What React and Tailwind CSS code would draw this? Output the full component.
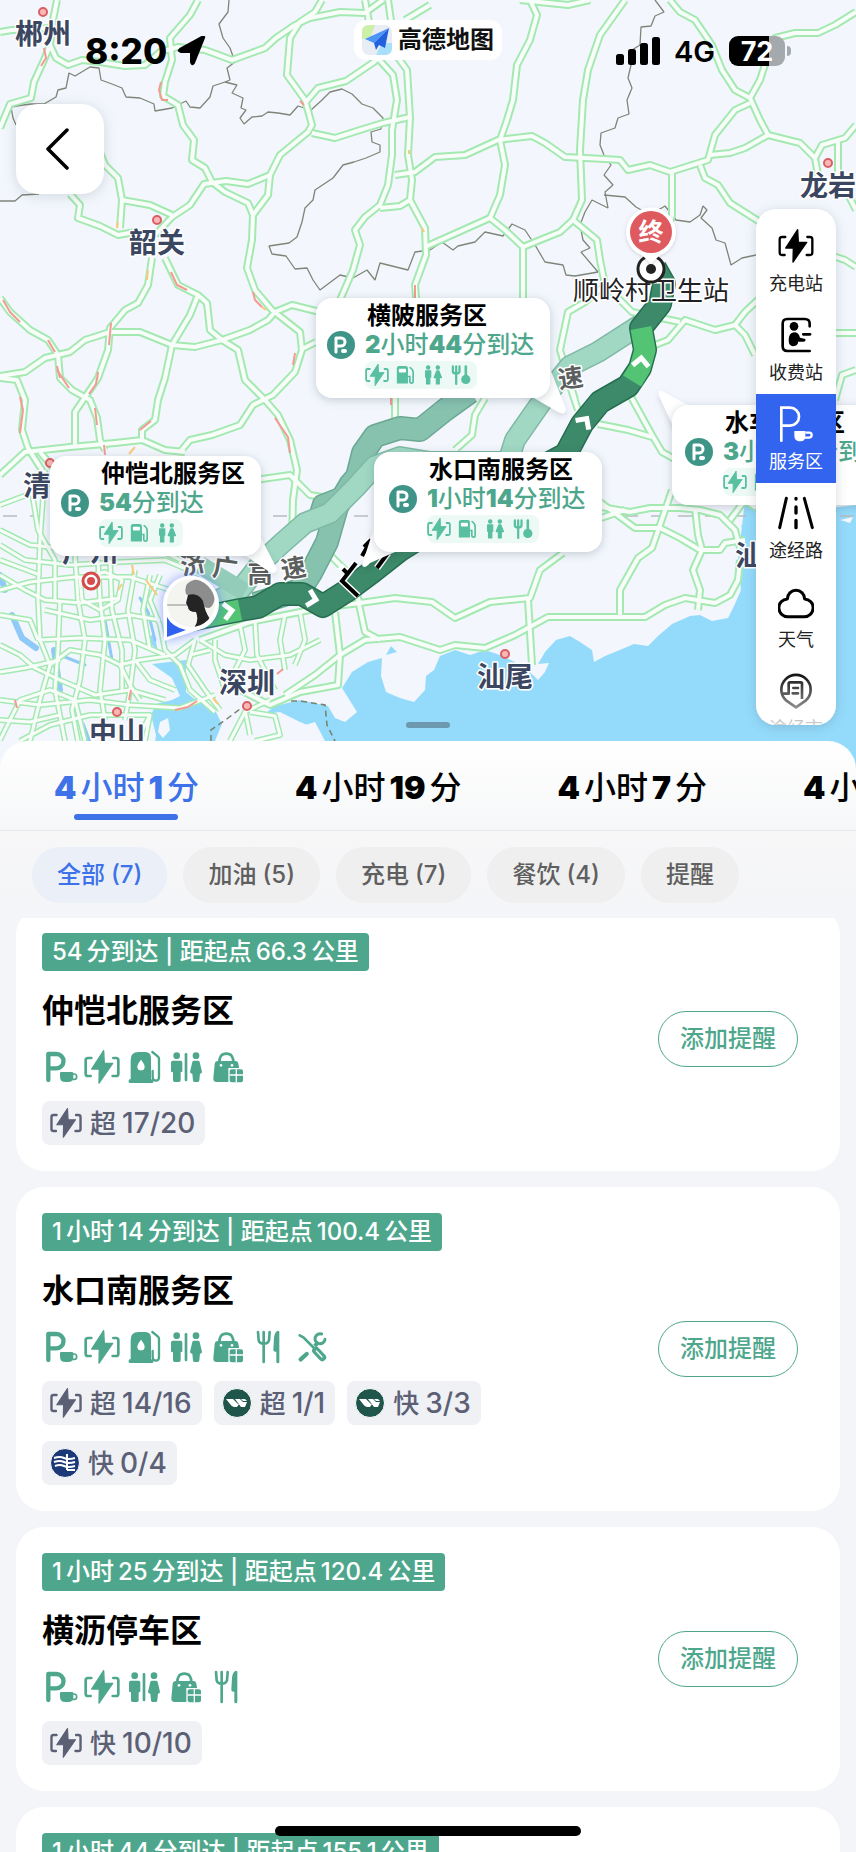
import React, { useState } from 'react';
import clsx from 'clsx';

/* ---------- map data ---------- */

const roads = [
  'M57 0 L53 20 L50 45 L44 60 L34 82 L31 98 L10 104 L0 128',
  'M0 32 L12 30 L50 28',
  'M50 45 L56 58 L68 65 L82 60 L100 62 L125 66 L145 65 L160 52 L178 47 L205 50 L232 60 L265 48 L276 38 L295 25 L310 18 L340 12 L365 13 L383 0',
  'M198 0 L190 15 L170 38 L172 60 L165 82 L163 96 L178 105 L183 125 L194 140 L192 160 L205 168 L212 182',
  'M322 0 L315 12 L300 22 L290 38 L288 62 L287 75 L305 100 L312 125 L308 132 L280 155 L270 175 L248 184 L226 181 L204 184 L190 205 L172 217 L155 235',
  'M95 140 L105 165 L118 178 L122 200 L150 205 L172 215',
  'M122 200 L120 228',
  'M70 194 L80 205 L78 218 L100 226 L118 235 L135 232',
  'M212 182 L225 192 L248 203 L253 215 L252 240 L247 268 L255 290 L272 310 L300 332 L302 350 L295 372 L273 395 L253 405 L240 425 L212 435 L190 440 L180 452',
  'M270 175 L268 195 L253 215',
  'M306 102 L318 88 L346 81 L374 62 L392 45',
  'M312 133 L335 138 L360 130 L383 123 L410 117',
  'M365 0 L375 55 L393 75 L397 100 L392 130 L392 155 L388 185 L380 205 L365 217 L355 230 L360 245 L353 270 L340 300',
  'M388 0 L396 55 L407 70 L410 118 L408 155 L412 180 L410 200 L425 228 L426 255 L415 285 L417 310',
  'M380 208 L400 206 L410 200',
  'M405 20 L430 5',
  'M395 175 L415 172 L435 157 L465 155 L498 140 L532 136 L545 143 L565 157 L605 159 L620 160 L628 170 L650 165 L670 172 L708 160 L715 135 L735 110 L750 103',
  'M530 0 L537 15 L530 40 L517 65 L513 100 L507 120 L500 140 L505 165 L500 195 L490 218 L505 230 L523 247 L523 320',
  'M490 218 L425 247',
  'M625 0 L600 35 L588 70 L583 100 L580 150 L582 200 L573 220 L597 240 L600 260 L605 285 L632 312 L680 322',
  'M573 220 L560 232 L545 238 L523 247',
  'M672 172 L672 215 L665 240',
  'M670 0 L680 12 L695 20 L712 45 L722 70 L735 90 L750 98 L760 120 L768 135 L800 143 L815 158 L818 175',
  'M815 158 L822 145 L845 138 L856 125',
  'M838 142 L838 175 L856 210',
  'M750 98 L760 80 L768 55 L775 38 L795 33 L818 33 L835 25 L856 12',
  'M768 135 L745 148 L730 153 L710 155',
  'M700 165 L705 178 L718 185 L730 203 L760 222',
  'M520 0 L568 5 L590 0',
  'M760 298 L745 312 L735 325 L715 330 L685 320 L668 340 L650 347',
  'M605 285 L585 302 L568 312 L560 350 L575 400',
  'M735 325 L745 335 L755 355',
  'M830 255 L845 260 L856 267',
  'M830 333 L856 333',
  'M856 370 L842 375 L835 400',
  'M630 395 L652 435 L662 452 L680 462',
  'M598 424 L628 430 L652 437',
  'M152 258 L148 285 L138 303 L125 310 L110 328 L108 350 L98 378 L75 412 L75 445',
  'M165 258 L178 285 L198 295 L190 315 L172 345 L165 378 L158 400 L155 420 L142 430 L142 442',
  'M198 295 L207 303 L210 330 L222 340 L238 350 L245 380 L265 400 L278 415 L290 440 L297 470 L293 500 L292 540',
  'M222 340 L250 330 L268 320 L275 312 L292 305 L320 312',
  'M0 376 L25 372 L45 358 L70 352 L85 340 L110 332 L140 332 L172 345 L195 347 L222 340',
  'M0 298 L10 312 L30 330 L48 340 L58 355 L60 378 L72 390 L90 400 L97 418 L100 440 L105 450',
  'M316 342 L300 350',
  'M0 378 L17 380 L25 400 L22 430 L28 448 L45 475',
  'M0 475 L25 452 L70 447 L115 443 L142 440 L165 450 L185 452',
  'M255 480 L290 475 L310 495 L340 500',
  'M395 380 L395 418',
  'M485 398 L475 415 L472 435 L455 450',
  'M568 380 L578 410',
  'M590 505 L630 512 L650 508 L680 508 L700 510 L720 515 L735 530 L740 548',
  'M595 520 L625 510',
  'M600 502 L635 528 L660 528 L680 538 L700 550 L720 550 L725 543 L745 540',
  'M672 490 L660 525 L652 548 L638 558 L620 590 L620 615',
  'M695 508 L698 535 L702 550 L693 570 L700 590 L698 610',
  'M740 560 L738 580 L730 595 L715 603 L685 598 L665 605 L645 617 L548 617 L515 635 L485 648 L455 645 L440 650 L400 637 L365 640 L340 655 L315 675 L285 695',
  'M563 553 L540 570 L530 598 L490 602 L455 618 L432 602 L395 598 L360 603 L320 608 L250 622 L200 640',
  'M528 600 L532 665',
  'M357 595 L365 632 L380 640',
  'M335 612 L340 655 L338 685 L300 692 L270 705 L240 690',
  'M730 520 L745 500 L756 508',
  'M40 452 L80 500 L130 520 L200 515',
  'M320 545 L345 570 L360 603',
];

// city grid around the delta, drawn thinner than the trunk roads
const streets = [
  'M0 505 L40 490 L70 470', 'M0 545 L25 560 L70 565 L120 562 L165 560 L200 575',
  'M0 530 L30 545 L60 548 L110 545 L160 552', 'M0 590 L30 582 L75 577 L130 577 L170 590',
  'M0 575 L25 590 L45 600 L80 603 L120 598', 'M45 470 L40 540 L38 600 L40 640 L50 665 L40 700 L30 741',
  'M30 480 L38 530 L55 560 L55 600', 'M75 555 L78 600 L85 640 L80 680 L72 710 L78 741',
  'M98 560 L100 600 L105 640 L100 690 L105 720', 'M110 560 L112 610 L122 650 L122 690',
  'M135 570 L128 610 L135 650 L130 690 L125 720', 'M150 575 L143 610 L150 650',
  'M80 578 L82 600 L100 610 L118 600 L122 580 L105 572 Z', 'M0 645 L20 655 L35 668 L60 680 L95 695 L130 690 L165 700',
  'M38 640 L80 638 L130 640 L165 655', 'M0 700 L40 705 L90 700 L130 705 L180 708 L215 695',
  'M0 740 L20 700 L50 690 L75 700 L85 741', 'M20 741 L50 725 L90 715 L150 715',
  'M50 665 L70 650 L100 655 L120 665 L140 660 L175 655 L195 640', 'M0 615 L30 620 L38 640',
  'M45 610 L90 620 L130 615 L160 620', 'M160 575 L150 600 L160 625 L165 650 L180 665 L190 690 L215 712',
  'M195 640 L188 665 L205 690 L220 710', 'M200 640 L225 655 L250 660 L290 655 L320 640',
  'M215 640 L215 660 L225 690', 'M210 650 L190 655', 'M240 625 L245 650 L230 680', 'M255 620 L257 655 L275 690',
  'M285 615 L280 640 L285 670', 'M300 612 L305 640 L295 665', 'M135 660 L150 680 L175 690', 'M120 665 L130 685 L140 700',
  'M60 600 L58 650 L55 690 L65 741', 'M0 672 L25 668 L60 660', 'M245 710 L250 735', 'M250 712 L275 716 L280 735 L255 741',
  'M0 560 L40 575', 'M0 720 L30 722 L60 715', 'M140 735 L150 715 L145 741', 'M270 700 L245 712 L230 741', 'M180 560 L150 545 L110 530',
];

const jams = [
  'M44 48 L46 58 L41 66', 'M161 82 L159 90 L162 100 L168 100', 'M171 272 L177 285 L187 290', 'M253 292 L255 300 L262 307',
  'M3 300 L10 312 L20 322', 'M48 340 L55 352', 'M57 366 L60 378', 'M111 323 L109 345', 'M98 372 L97 380', 'M20 397 L23 410 L20 433',
  'M97 378 L96 384 L89 394', 'M57 370 L69 388', 'M95 408 L97 425', 'M151 421 L140 430', 'M275 418 L288 437 L290 453',
  'M295 353 L293 365', 'M175 710 L188 707 L197 701', 'M131 690 L129 700', 'M15 700 L17 708', 'M300 101 L304 105', 'M391 398 L391 405',
  'M104 445 L105 455', 'M415 285 L415 298', 'M277 674 L283 669',
];

const slow = ['M148 270 L147 280', 'M118 222 L117 228', 'M262 307 L266 310', 'M146 580 L157 595', 'M213 698 L218 704', 'M118 590 L122 584', 'M409 150 L409 154', 'M129 454 L135 447', 'M132 565 L134 575', 'M422 228 L424 232'];

const borders = [
  'M229 0 L228 12 L219 24 L223 38 L230 48 L235 62 L227 68 L230 80 L225 82 L237 85 L232 93 L243 98 L241 108 L246 110 L240 118 L244 124 L252 117 L262 116 L268 112 L278 113 L290 115 L298 106 L311 110 L322 100 L330 92 L342 89 L352 94 L362 104 L373 108 L383 118 L381 129 L371 132 L372 142 L380 145 L380 152 L366 158 L354 162 L343 165 L333 178 L315 190 L313 200 L305 208 L302 222 L297 237 L289 243 L269 246 L272 254 L286 256 L295 269 L307 268 L313 280 L320 290 L340 275 L353 278 L367 270 L375 280 L380 263 L400 268 L408 270 L415 252 L430 250',
  'M225 82 L213 86 L210 97 L200 108 L190 107 L186 101 L172 108 L155 111 L154 104 L140 98 L126 97 L122 88 L112 84 L101 80 L99 68 L90 67 L75 76 L69 73 L66 88 L58 90 L56 97 L44 104 L31 104 L23 105 L11 107 L13 118 L16 125',
  'M0 201 L15 201 L22 195 L39 194',
  'M655 0 L664 12 L655 16 L651 26 L641 27 L640 45 L632 50 L631 65 L628 78 L632 88 L627 100 L629 114 L618 118 L615 128 L601 133 L600 145 L604 155 L611 165 L604 175 L613 185 L605 192 L608 208 L592 200 L585 212 L580 225 L583 240 L590 248 L581 252 L598 272 L575 276 L566 275 L563 265 L545 262 L535 245 L525 230 L512 224 L503 236 L485 232 L475 242 L458 246 L453 250 L442 242 L430 250',
  'M604 195 L625 197 L636 207 L650 215 L665 206 L676 220 L690 222 L700 215 L703 206 L707 210 L701 218 L712 228 L716 240 L725 243 L731 265 L742 258 L756 255',
];

const cities = [
  { name: '郴州', x: 43, y: 44, dot: [43, 12] },
  { name: '韶关', x: 157, y: 253, dot: [157, 220] },
  { name: '龙岩', x: 828, y: 196, dot: [828, 163] },
  { name: '清远', x: 51, y: 496, dot: [50, 463] },
  { name: '广州', x: 90, y: 562 },
  { name: '深圳', x: 247, y: 693, dot: [247, 706] },
  { name: '中山', x: 117, y: 743, dot: [117, 712] },
  { name: '汕尾', x: 505, y: 687, dot: [505, 654] },
  { name: '汕头', x: 763, y: 566 },
];

/* ---------- icons ---------- */

const Svg = ({ className = 'h-9 w-9', children, ...rest }) => (
  <svg viewBox="0 0 108 108" className={className} fill="currentColor" aria-hidden="true" {...rest}>
    {children}
  </svg>
);

const ParkingCup = ({ className }) => (
  <Svg className={className}>
    <path d="M19 93 V15 H43 A21 21 0 0 1 43 58 H28" fill="none" stroke="currentColor" strokeWidth="13" strokeLinecap="round" strokeLinejoin="round" />
    <path d="M57 69 H90 Q94 69 94 73 V83 Q94 99 79 99 H70 Q54 99 54 83 V73 Q54 69 57 69 Z" />
    <path d="M92 75 H96 A8 8 0 0 1 96 91 H90" fill="none" stroke="currentColor" strokeWidth="5" />
  </Svg>
);

const Charge = ({ className, thin }) => (
  <Svg className={className}>
    <path d="M59 5 L23 60 H46 L45 102 L86 43 H61 Z" stroke="currentColor" strokeWidth="4" strokeLinejoin="round" />
    <path
      d="M22 27 H12 Q5 27 5 34 V74 Q5 81 12 81 H20 M88 27 H96 Q103 27 103 34 V74 Q103 81 96 81 H86"
      fill="none"
      stroke="currentColor"
      strokeWidth={thin ? 7 : 8}
      strokeLinecap="round"
    />
  </Svg>
);

const Pump = ({ className }) => (
  <Svg className={className}>
    <path d="M14 96 V32 Q14 9 37 9 H58 Q75 9 75 28 V96 Z" />
    <rect x="8" y="91" width="74" height="11" rx="4" />
    <path d="M45 32 Q56 46 56 53 A11 11 0 0 1 34 53 Q34 46 45 32 Z" fill="white" />
    <path d="M79 9 L96 23 Q99 26 99 31 V84 Q99 95 90 95 Q80 95 80 84 V66" fill="none" stroke="currentColor" strokeWidth="7" strokeLinecap="round" />
  </Svg>
);

const Restroom = ({ className }) => (
  <Svg className={className}>
    <circle cx="26" cy="20" r="10" />
    <path d="M14 35 H38 Q43 35 43 41 V66 Q43 70 38 70 V94 Q38 99 33 99 H20 Q15 99 15 94 V70 Q9 70 9 66 V41 Q9 35 14 35 Z" />
    <rect x="50" y="12" width="8" height="85" rx="4" />
    <circle cx="84" cy="20" r="10" />
    <path d="M78 35 H90 Q94 35 95 39 L102 68 Q102 74 96 74 L94 94 Q94 99 90 99 H79 Q75 99 75 94 L73 74 Q66 74 66 68 L73 39 Q74 35 78 35 Z" />
  </Svg>
);

const ShopBag = ({ className }) => (
  <Svg className={className}>
    <path d="M28 42 Q27 14 49 14 Q71 14 70 42" fill="none" stroke="currentColor" strokeWidth="8" />
    <path d="M24 36 H76 Q84 36 85 44 L88 60 V99 H20 Q9 99 10 88 L14 45 Q15 36 24 36 Z" />
    <circle cx="33" cy="49" r="4" fill="white" />
    <circle cx="66" cy="49" r="4" fill="white" />
    <rect x="55" y="57" width="46" height="44" fill="white" />
    <rect x="59" y="61" width="40" height="39" rx="6" />
    <path d="M79 61 V100 M59 78 H99" stroke="white" strokeWidth="4" />
  </Svg>
);

const Dining = ({ className }) => (
  <Svg className={className}>
    <path d="M18 9 L20 34 Q22 44 35 44 Q48 44 51 34 L53 9 M35 9 V99" fill="none" stroke="currentColor" strokeWidth="8" strokeLinecap="round" />
    <path d="M82 9 V98 Q82 103 78 103 Q73 103 73 98 V68 Q64 68 64 62 L66 26 Q68 8 78 5 Q82 5 82 9 Z" />
  </Svg>
);

const Tools = ({ className }) => (
  <Svg className={className}>
    <path d="M17 19 L28 25 L60 57" fill="none" stroke="currentColor" strokeWidth="8" strokeLinecap="round" />
    <path d="M66 65 L85 85" stroke="currentColor" strokeWidth="23" strokeLinecap="round" />
    <path d="M67 66 L84 84" stroke="white" strokeWidth="4" strokeLinecap="round" />
    <path d="M20 91 L38 75" stroke="currentColor" strokeWidth="13" strokeLinecap="round" />
    <path d="M62 51 L70 43" stroke="currentColor" strokeWidth="12" />
    <path d="M83 15 A15 15 0 1 0 93 31" fill="none" stroke="currentColor" strokeWidth="9" strokeLinecap="round" />
  </Svg>
);

const MiniPump = ({ className }) => (
  <Svg className={className}>
    <path d="M10 100 V18 Q10 6 22 6 H58 Q70 6 70 18 V100 Z" />
    <rect x="21" y="20" width="38" height="20" rx="4" fill="white" />
    <path d="M82 14 Q98 24 98 40 V88 Q98 98 90 98 Q80 98 80 88 V62 H70" fill="none" stroke="currentColor" strokeWidth="9" strokeLinecap="round" />
  </Svg>
);

const MiniPeople = ({ className }) => (
  <Svg className={className}>
    <circle cx="28" cy="14" r="12" />
    <path d="M14 32 H42 V66 H37 V102 H19 V66 H14 Z" strokeLinejoin="round" stroke="currentColor" strokeWidth="6" />
    <circle cx="80" cy="14" r="12" />
    <path d="M74 32 H86 L100 68 H88 V102 H72 V68 H60 Z" strokeLinejoin="round" stroke="currentColor" strokeWidth="6" />
  </Svg>
);

const MiniDining = ({ className }) => (
  <Svg className={className}>
    <path d="M10 8 V34 Q10 46 28 46 Q46 46 46 34 V8 M28 8 V102" fill="none" stroke="currentColor" strokeWidth="12" strokeLinecap="round" />
    <path d="M80 8 V60" stroke="currentColor" strokeWidth="14" strokeLinecap="round" />
    <circle cx="80" cy="78" r="25" />
  </Svg>
);

const Toll = ({ className }) => (
  <Svg className={className}>
    <path d="M95 28 V20 Q95 6 80 6 H28 Q14 6 14 20 V88 Q14 102 28 102 H95" fill="none" stroke="currentColor" strokeWidth="8" strokeLinecap="round" />
    <circle cx="48" cy="28" r="13" />
    <path d="M48 46 Q62 46 66 62 L82 66 Q84 74 76 74 L60 74 V78 Q56 88 44 88 Q32 86 32 70 Q32 48 48 46 Z" />
    <path d="M76 52 H96" stroke="currentColor" strokeWidth="8" strokeLinecap="round" />
  </Svg>
);

const ServiceArea = ({ className }) => (
  <Svg className={className}>
    <path d="M10 104 V5 H36 A27 27 0 0 1 36 59 H12" fill="none" stroke="currentColor" strokeWidth="8" strokeLinecap="round" />
    <path d="M49 75 H82 V90 Q82 106 68 106 H62 Q49 104 49 88 Z" />
    <path d="M82 80 H94 Q101 80 101 87 Q101 95 92 95 H78" fill="none" stroke="currentColor" strokeWidth="7" />
  </Svg>
);

const RoadIcon = ({ className }) => (
  <Svg className={className} fill="none" stroke="currentColor" strokeLinecap="round">
    <path d="M25 10 L5 98 M79 10 L103 98" strokeWidth="9" />
    <path d="M54 10 V12 M54 36 V54 M54 76 V98" strokeWidth="10" />
  </Svg>
);

const Cloud = ({ className }) => (
  <Svg className={className} fill="none" stroke="currentColor" strokeWidth="9">
    <path d="M28 45 A26 26 0 1 1 80 45 A26 26 0 0 1 78 98 H30 A26 26 0 0 1 28 45 Z" strokeLinejoin="round" />
  </Svg>
);

const CityPin = ({ className }) => (
  <Svg className={className} fill="none" stroke="currentColor" strokeWidth="8" strokeLinejoin="round">
    <path d="M54 103 L24 82 A44 44 0 1 1 84 82 Z" />
    <path d="M14 62 H32 V32 Q32 28 36 28 H68 Q72 28 72 32 V78" />
    <path d="M46 45 H60 M44 61 H60" strokeLinecap="round" />
  </Svg>
);

const GreenBrand = () => (
  <svg viewBox="0 0 30 30" className="h-[30px] w-[30px]" aria-hidden="true">
    <circle cx="15" cy="15" r="14.5" fill="#20554b" stroke="white" />
    <path d="M4 11 H11 L16 16 H17 L15 19 H12 Q10 19 8 16 Z" fill="white" />
    <path d="M13 11 H18 L21 14 H25 L23 19 H19 Z M19 11 H23 L25 13 H21 Z" fill="white" />
  </svg>
);

const NavyBrand = () => (
  <svg viewBox="0 0 30 30" className="h-[30px] w-[30px]" aria-hidden="true">
    <circle cx="15" cy="15" r="14.5" fill="#1d3a78" stroke="white" />
    <path d="M4 10 Q10 8 14 10 T25 10 M4 14 Q10 12 14 14 T25 14 M5 18 Q10 16 14 18 T25 18" fill="none" stroke="white" strokeWidth="2" />
    <path d="M17 6 V22 M17 22 H25" fill="none" stroke="white" strokeWidth="2" />
  </svg>
);

const facilityIcons = { parking: ParkingCup, charge: Charge, pump: Pump, restroom: Restroom, shop: ShopBag, dining: Dining, repair: Tools };
const miniIcons = { charge: Charge, pump: MiniPump, restroom: MiniPeople, dining: MiniDining };

/* ---------- content ---------- */

const routes = ['4小时1分', '4小时19分', '4小时7分', '4小时26分'];

const filters = [
  { label: '全部', count: 7 },
  { label: '加油', count: 5 },
  { label: '充电', count: 7 },
  { label: '餐饮', count: 4 },
  { label: '提醒' },
];

const layers = [
  { label: '充电站', icon: Charge },
  { label: '收费站', icon: Toll },
  { label: '服务区', icon: ServiceArea },
  { label: '途经路', icon: RoadIcon },
  { label: '天气', icon: Cloud },
  { label: '途经市', icon: CityPin },
];

const callouts = [
  { name: '水车服务区', eta: '3小时19分到达', place: 'left-[672px] top-[405px] pl-[13px]', icons: ['charge', 'pump', 'restroom'] },
  { name: '横陂服务区', eta: '2小时44分到达', place: 'left-[316px] top-[298px] pl-[11px]', icons: ['charge', 'pump', 'restroom', 'dining'] },
  { name: '仲恺北服务区', eta: '54分到达', place: 'left-[50px] top-[456px] pl-[11px]', icons: ['charge', 'pump', 'restroom'] },
  { name: '水口南服务区', eta: '1小时14分到达', place: 'left-[374px] top-[452px] pl-[15px]', icons: ['charge', 'pump', 'restroom', 'dining'] },
];

const areas = [
  {
    name: '仲恺北服务区',
    info: '54分到达 | 距起点66.3公里',
    facilities: ['parking', 'charge', 'pump', 'restroom', 'shop'],
    chargers: [{ text: '超17/20' }],
  },
  {
    name: '水口南服务区',
    info: '1小时14分到达 | 距起点100.4公里',
    facilities: ['parking', 'charge', 'pump', 'restroom', 'shop', 'dining', 'repair'],
    chargers: [{ text: '超14/16' }, { text: '超1/1', brand: 'green' }, { text: '快3/3', brand: 'green' }, { text: '快0/4', brand: 'navy' }],
  },
  {
    name: '横沥停车区',
    info: '1小时25分到达 | 距起点120.4公里',
    facilities: ['parking', 'charge', 'restroom', 'shop', 'dining'],
    chargers: [{ text: '快10/10' }],
  },
  {
    name: '热水服务区',
    info: '1小时44分到达 | 距起点155.1公里',
    facilities: ['parking', 'charge', 'pump', 'restroom'],
    chargers: [{ text: '快4/4' }],
  },
];

// Puts each run of digits in its own span so it can be weighted and spaced
const Mixed = ({ text, numClass }) =>
  text
    .split(/([\d./]+)/)
    .filter(Boolean)
    .map((part, i) =>
      /\d/.test(part) ? (
        <span key={i} className={numClass}>
          {part}
        </span>
      ) : (
        part
      )
    );

/* ---------- map ---------- */

const Chevron = ({ x, y, r }) => (
  <path d="M-5 -8 L3 0 L-5 8" transform={`translate(${x} ${y}) rotate(${r})`} fill="none" stroke="white" strokeWidth="5" />
);

const MapCanvas = () => (
  <svg viewBox="0 0 856 780" className="absolute left-0 top-0 h-[780px] w-[856px]" role="img" aria-label="路线地图">
    <defs>
      <clipPath id="avatar">
        <circle cx="191" cy="603" r="24" />
      </clipPath>
      <filter id="soft" x="-50%" y="-50%" width="200%" height="200%">
        <feGaussianBlur stdDeviation="6" />
      </filter>
    </defs>
    <rect width="856" height="780" fill="#f3f7fd" />

    {/* water */}
    <g fill="#94dbfb">
      <path d="M856 505 L830 508 L815 500 L745 500 L738 560 L741 590 L734 606 L728 618 L712 621 L700 615 L690 616 L672 624 L658 636 L648 646 L634 644 L615 652 L605 656 L594 662 L592 650 L580 642 L570 636 L556 640 L545 652 L538 664 L549 663 L545 672 L538 680 L526 668 L515 662 L500 655 L485 650 L470 655 L455 650 L440 656 L434 670 L426 676 L425 690 L414 702 L400 698 L386 692 L381 676 L382 658 L368 662 L352 672 L342 688 L357 712 L345 722 L335 718 L328 706 L300 700 L275 706 L262 716 L290 730 L315 722 L325 741 L325 780 L856 780 Z" />
      <path d="M152 664 L186 660 L186 692 L198 702 L214 708 L222 724 L215 741 L215 780 L150 780 L156 735 L151 715 L156 704 L172 700 L180 696 L172 678 Z" />
      <path d="M148 640 L158 652 L154 632 Z M386 655 L397 652 L391 646 Z" />
      <path d="M741 525 L756 532 L756 542 L745 538 Z" />
    </g>
    <g fill="#f3f7fd">
      <path d="M160 722 L168 718 L170 730 L163 738 L158 732 Z" />
      <path d="M224 726 L240 718 L280 712 L300 722 L315 728 L320 741 L222 741 Z" />
      <path d="M840 520 L853 517 L850 523 Z" />
    </g>
    <g fill="none" stroke="#8fc9f8" strokeLinecap="round">
      <path d="M0 575 L5 590 M12 615 L22 638 L36 648 M54 650 L60 690 M82 725 L88 741" strokeWidth="6" />
      <path d="M140 598 L148 612 L155 640 M60 655 L85 665 M105 620 L112 660" strokeWidth="3" />
    </g>

    {/* tropic line and regional borders */}
    <path d="M3 516 H856" stroke="#b9bcc0" strokeWidth="1.5" strokeDasharray="14 13" />
    <g fill="none" stroke="#7f8578" strokeWidth="1.3" strokeLinejoin="bevel">
      {borders.map((d) => (
        <path key={d} d={d} />
      ))}
    </g>
    <path d="M211 741 L211 730 L228 718 L244 706 L262 706 L272 701 L300 701 L325 705 L327 725 L335 741" fill="none" stroke="#76806c" strokeWidth="1.5" strokeDasharray="6 4" />

    {/* road network */}
    <g fill="none" strokeLinejoin="round">
      <g stroke="#a3e9b1" strokeWidth="6">
        {streets.map((d) => (
          <path key={d} d={d} />
        ))}
      </g>
      <g stroke="#a3e9b1" strokeWidth="8">
        {roads.map((d) => (
          <path key={d} d={d} />
        ))}
      </g>
      <g stroke="#f8fdf9" strokeWidth="3">
        {streets.map((d) => (
          <path key={d} d={d} />
        ))}
        {roads.map((d) => (
          <path key={d} d={d} strokeWidth="4" />
        ))}
      </g>
      <g stroke="#f49a94" strokeWidth="2">
        {jams.map((d) => (
          <path key={d} d={d} />
        ))}
      </g>
      <g stroke="#fbc97e" strokeWidth="2">
        {slow.map((d) => (
          <path key={d} d={d} />
        ))}
      </g>
    </g>

    {/* alternative routes */}
    <g fill="none" strokeLinejoin="round">
      <path d="M255 604 L300 590 L311 573 L327 542 L337 507 L350 485 L357 477 L363 453 L375 436 L400 428 L420 430 L445 410 L470 392" stroke="#6aa893" strokeWidth="24" />
      <path d="M317 520 L322 504 L345 495" stroke="#6aa893" strokeWidth="20" />
      <path d="M255 604 L300 590 L311 573 L327 542 L337 507 L350 485 L357 477 L363 453 L375 436 L400 428 L420 430 L445 410 L470 392" stroke="#87c2af" strokeWidth="21" />
      <path d="M317 520 L322 504 L345 495" stroke="#87c2af" strokeWidth="17" />
      <path d="M205 606 L240 590 L262 562 L280 545 L305 523 L330 513 L355 488 L375 466 L400 457 L430 462 L508 462 L515 440 L545 397 L570 366 L598 352 L640 325" stroke="#7fb9a4" strokeWidth="22" />
      <path d="M205 606 L240 590 L262 562 L280 545 L305 523 L330 513 L355 488 L375 466 L400 457 L430 462 L508 462 L515 440 L545 397 L570 366 L598 352 L640 325" stroke="#a0d8c4" strokeWidth="19" />
      <path d="M200 565 L245 592" stroke="#93cdb9" strokeWidth="18" />
    </g>

    {/* chosen route */}
    <g fill="none" strokeLinejoin="round">
      <path d="M190 620 L240 610 L258 607 L280 594 L302 594 L323 606 L345 592 L372 572 L400 550 L480 500 L566 454 L582 424 L600 402 L628 386 L640 368 L645 350 L641 328 L660 304 L664 284 L655 268" stroke="#276e51" strokeWidth="24" />
      <path d="M190 620 L240 610 L258 607 L280 594 L302 594 L323 606 L345 592 L372 572 L400 550 L480 500 L566 454 L582 424 L600 402 L628 386 L640 368 L645 350 L641 328 L660 304 L664 284 L655 268" stroke="#3c8a69" strokeWidth="21" />
      <path d="M205 617 L240 610 M632 381 L640 368 L645 350 L641 328" stroke="#53c474" strokeWidth="21" />
    </g>
    <Chevron x={229} y={611} r={-8} />
    <Chevron x={313} y={599} r={14} />
    <Chevron x={585} y={421} r={-55} />
    <Chevron x={641} y={361} r={-85} />
    <path d="M358 596 L342 581 L356 563 M347 573 L340 566 M362 560 L371 540 L364 547 M377 568 L388 553" fill="none" stroke="white" strokeWidth="7" />
    <path d="M358 596 L342 581 L356 563 M347 573 L343 569 M362 556 L371 540 L364 547 M377 568 L388 553" fill="none" stroke="black" strokeWidth="4" />

    {/* labels */}
    <g className="font-['Noto_Sans_CJK_SC',sans-serif]" textAnchor="middle" stroke="white" strokeWidth="3" strokeLinejoin="round" style={{ paintOrder: 'stroke' }}>
      <g fontSize="25" fontWeight="700" fill="#5b605e">
        <text transform="translate(195 573) rotate(-12)">济</text>
        <text transform="translate(224 577) rotate(8)">广</text>
        <text transform="translate(260 583)">高</text>
        <text transform="translate(295 577) rotate(-10)">速</text>
        <text transform="translate(572 387) rotate(-8)">速</text>
      </g>
      <g fontSize="28" fontWeight="700" fill="#3b4661">
        {cities.map((c) => (
          <text key={c.name} x={c.x} y={c.y}>
            {c.name}
          </text>
        ))}
      </g>
      <text x="651" y="300" fontSize="26" fill="#1f2124">
        顺岭村卫生站
      </text>
    </g>
    {cities
      .filter((c) => c.dot)
      .map((c) => (
        <circle key={c.name} cx={c.dot[0]} cy={c.dot[1]} r="4" fill="#f9b7b7" stroke="#d95f62" strokeWidth="2" />
      ))}
    <circle cx="91" cy="581" r="8" fill="white" stroke="#d64b4b" strokeWidth="3" />
    <circle cx="91" cy="581" r="4" fill="#d64b4b" />

    {/* start */}
    <path d="M165 641 L163 605 A28 28 0 1 1 205 628 Z" fill="#4a6cf0" opacity="0.6" filter="url(#soft)" />
    <path d="M164 641 L163 604 A28 28 0 1 1 205 628 Z" fill="white" />
    <g clipPath="url(#avatar)">
      <rect x="165" y="577" width="54" height="54" fill="#f4f4f0" />
      <path d="M186 594 Q183 583 194 580 Q204 576 211 584 Q218 594 213 604 Q210 611 203 606 L192 598 Z" fill="#8d8d8d" />
      <path d="M188 595 Q198 592 203 601 Q205 612 210 619 L206 630 H192 Q200 622 196 612 Q188 612 188 607 L186 603 Z" fill="#242424" />
      <path d="M167 605 H187" stroke="#8a8a8a" strokeWidth="1" />
    </g>
    <path d="M167 617 L167 637 L186 630 Q172 627 167 617 Z" fill="#2f62ee" />

    {/* finish */}
    <circle cx="651" cy="269" r="13" fill="white" stroke="#222" strokeWidth="3" />
    <circle cx="651" cy="269" r="5" fill="#222" />
    <path d="M651 264 L643 256 A25 25 0 1 1 659 256 Z" fill="white" className="drop-shadow" />
    <circle cx="651" cy="232" r="21" fill="#df5a5f" />
    <text x="651" y="241" fontSize="25" fontWeight="700" fill="white" textAnchor="middle" className="font-['Noto_Sans_CJK_SC',sans-serif]">
      终
    </text>

    {/* callout tails */}
    <g fill="white" className="drop-shadow-md">
      <path d="M520 390 L549 366 L566 409 Q565 416 558 412 L534 398 Z" />
      <path d="M240 550 L259 534 L277 569 Q275 576 268 571 L246 556 Z" />
      <path d="M374 528 L362 565 Q364 570 370 563 L395 552 L402 540 Z" />
      <path d="M672 424 L659 396 Q657 389 664 392 L690 406 L684 430 Z" />
    </g>
  </svg>
);

const Callout = ({ name, eta, place, icons }) => (
  <button
    type="button"
    className={clsx(
      'absolute grid h-[100px] grid-cols-[28px_auto] grid-rows-[28px_30px_30px] gap-x-2.5 rounded-2xl bg-white pr-4 pt-1 text-left shadow-[0_2px_10px_rgba(60,70,90,0.25)]',
      place
    )}
  >
    <span className="col-start-2 whitespace-nowrap pl-0.5 text-2xl/7 font-bold text-black">{name}</span>
    <svg viewBox="0 0 28 28" className="h-7 w-7 self-center" aria-hidden="true">
      <circle cx="14" cy="14" r="14" fill="#3f9488" />
      <path d="M9 21 V7 H14 A4 4 0 0 1 14 15 H11" fill="none" stroke="white" strokeWidth="3" strokeLinecap="round" strokeLinejoin="round" />
      <rect x="14" y="18" width="6" height="4" rx="2" fill="white" />
    </svg>
    <span className="whitespace-nowrap text-2xl/[30px] font-medium text-[#4ea78c]">
      <Mixed text={eta} numClass="font-black" />
    </span>
    <span className="col-start-2 flex h-7 items-center gap-1 self-center justify-self-start rounded-lg bg-[#ecf9f4] pr-1 text-[#58bfa1]">
      {icons.map((key) => {
        const Icon = miniIcons[key];
        return <Icon key={key} className={key === 'charge' ? 'h-6 w-6' : 'mx-0.5 h-5 w-5'} />;
      })}
    </span>
  </button>
);

const StatusBar = () => (
  <div className="absolute inset-x-0 top-0 flex h-[102px] items-center justify-between pl-[85px] pr-[65px]">
    <div className="flex items-center gap-2.5">
      <span className="text-[35px] font-extrabold leading-none">8:20</span>
      <svg viewBox="0 0 30 30" className="h-[30px] w-[30px]" aria-hidden="true">
        <path d="M27 2 L17 27 Q15 30 14 26 V17 Q14 16 13 16 L4 16 Q0 15 3 13 L25 1 Q28 0 27 2 Z" stroke="black" strokeWidth="2" strokeLinejoin="round" />
      </svg>
    </div>
    <div className="flex items-center gap-3.5">
      <svg viewBox="0 0 44 28" className="h-7 w-11" aria-hidden="true">
        <rect x="0" y="17" width="8" height="11" rx="2.5" />
        <rect x="12" y="12" width="8" height="16" rx="2.5" />
        <rect x="24" y="6" width="8" height="22" rx="2.5" />
        <rect x="36" y="0" width="8" height="28" rx="2.5" />
      </svg>
      <span className="text-[29px] font-semibold leading-none">4G</span>
      <div className="flex items-center gap-0.5">
        <div className="flex h-[30px] w-14 items-center justify-center rounded-[9px] bg-linear-to-r from-black from-72% to-[#a3a9ad] to-72% text-[27px] font-bold leading-none text-white">
          72
        </div>
        <div className="h-2.5 w-1 rounded-r-full bg-[#a3a9ad]" />
      </div>
    </div>
  </div>
);

const LayerPanel = () => {
  const [active, setActive] = useState('服务区');
  return (
    <div className="absolute right-5 top-[209px] h-[516px] w-20 overflow-hidden rounded-[20px] bg-white pt-[7px] shadow-[0_2px_12px_rgba(60,70,90,0.2)]">
      {layers.map(({ label, icon: Icon }) => (
        <button
          key={label}
          type="button"
          onClick={() => setActive(label)}
          className={clsx('flex h-[89px] w-full flex-col items-center gap-2 pt-3', active === label ? 'bg-[#3264f0] text-white' : 'text-black')}
        >
          <Icon className="h-9 w-9 shrink-0" thin />
          <span className={clsx('whitespace-nowrap text-lg/6', active === label ? 'text-white' : 'text-[#222]')}>{label}</span>
        </button>
      ))}
      <div className="pointer-events-none absolute inset-x-0 bottom-0 h-14 bg-linear-to-b from-white/0 to-white/80" />
    </div>
  );
};

/* ---------- sheet ---------- */

const AreaCard = ({ name, info, facilities, chargers }) => (
  <article className="flex items-center rounded-[28px] bg-white py-[26px] pl-[26px] pr-[42px]">
    <div className="min-w-0 flex-1">
      <p className="flex h-[38px] w-fit items-center whitespace-pre rounded-[4px] bg-[#4ea78c] px-2.5 text-2xl font-medium text-white">
        <span>
          <Mixed text={info} numClass="mx-1 first:ml-0" />
        </span>
      </p>
      <h2 className="mt-4 text-[32px]/12 font-bold text-black">{name}</h2>
      <div className="mt-3.5 flex gap-1.5 text-[#4ea78c]">
        {facilities.map((key) => {
          const Icon = facilityIcons[key];
          return <Icon key={key} />;
        })}
      </div>
      <ul className="mt-4 flex max-w-[520px] flex-wrap gap-x-3 gap-y-4">
        {chargers.map((c) => (
          <li key={c.text} className="flex h-11 items-center gap-2 rounded-lg bg-[#eff1f5] pl-2 pr-2.5 text-[26px] font-medium text-[#5c6075]">
            {c.brand === 'green' && <GreenBrand />}
            {c.brand === 'navy' && <NavyBrand />}
            {!c.brand && <Charge className="h-8 w-8" />}
            <span className="whitespace-nowrap">
              <Mixed text={c.text} numClass="ml-1.5 text-[28px]" />
            </span>
          </li>
        ))}
      </ul>
    </div>
    <button type="button" className="h-14 w-[140px] shrink-0 rounded-full border border-[#4ea78c] text-2xl font-medium text-[#4ea78c]">
      添加提醒
    </button>
  </article>
);

const App = () => {
  const [route, setRoute] = useState(0);
  const [filter, setFilter] = useState('全部');

  return (
    <main className="relative flex h-screen w-full flex-col overflow-hidden bg-[#f4f5f8] font-['Inter','Noto_Sans_CJK_SC',sans-serif]">
      {/* Map */}
      <section className="relative h-[741px] w-full shrink-0 bg-[#f3f7fd]">
        <MapCanvas />
        {callouts.map((c) => (
          <Callout key={c.name} {...c} />
        ))}
        <LayerPanel />
        <StatusBar />
        <div className="absolute left-1/2 top-5 flex h-10 -translate-x-1/2 items-center gap-1.5 whitespace-nowrap rounded-xl bg-white px-2 text-2xl font-bold text-[#111]">
          <svg viewBox="0 0 30 30" className="h-[30px] w-[30px]" aria-hidden="true">
            <rect width="30" height="30" rx="7" fill="#e8edf5" />
            <path d="M0 7 Q0 0 7 0 H13 L8 14 H0 Z" fill="#cdf0a8" />
            <path d="M20 18 H30 V23 Q30 30 23 30 H14 Z" fill="#a8e0fb" />
            <path d="M27 3 L3 14 L12 18 Z" fill="#4d94f7" />
            <path d="M27 3 L12 18 L14 25 L17 20 L23 23 Z" fill="#2161df" />
          </svg>
          高德地图
        </div>
        <button type="button" aria-label="返回" className="absolute left-4 top-[104px] flex h-[90px] w-[88px] items-center justify-center rounded-[22px] bg-white shadow-[0_2px_14px_rgba(60,70,90,0.18)]">
          <svg viewBox="0 0 24 42" className="mr-1 h-[42px] w-6" aria-hidden="true">
            <path d="M21 2 L2 21 L21 40" fill="none" stroke="black" strokeWidth="3.5" strokeLinecap="round" strokeLinejoin="round" />
          </svg>
        </button>
        <div className="absolute bottom-[13px] left-1/2 h-1.5 w-11 -translate-x-1/2 rounded-full bg-[#6d99b0]" />
      </section>

      {/* Route sheet */}
      <section className="relative flex min-h-0 flex-1 flex-col">
        <nav className="relative flex h-[90px] shrink-0 gap-24 overflow-hidden rounded-t-[28px] border-b border-[#e8e8ea] bg-linear-to-b from-white to-[#f6f7f8] pl-[54px]">
          {routes.map((r, i) => (
            <button
              key={r}
              type="button"
              onClick={() => setRoute(i)}
              className={clsx('relative shrink-0 whitespace-nowrap pt-1 text-[32px] font-medium', route === i ? 'text-[#3d72e8]' : 'text-black')}
            >
              <Mixed text={r} numClass="mx-1 first:ml-0 font-black" />
              {route === i && <span className="absolute bottom-2.5 left-1/2 h-1.5 w-[104px] -translate-x-1/2 rounded-full bg-[#3d72e8]" />}
            </button>
          ))}
        </nav>

        <div className="flex shrink-0 gap-4 bg-linear-to-b from-[#f7f7f8] to-[#f4f5f8] px-8 pb-[15px] pt-4">
          {filters.map((f) => (
            <button
              key={f.label}
              type="button"
              onClick={() => setFilter(f.label)}
              className={clsx(
                'flex h-14 items-center gap-1.5 whitespace-nowrap rounded-full px-[25px] text-2xl font-medium',
                filter === f.label ? 'bg-[#ebeff8] text-[#3d72e8]' : 'bg-[#efeff0] text-[#5f5f5f]'
              )}
            >
              {f.label}
              {f.count && <span>({f.count})</span>}
            </button>
          ))}
        </div>

        <div className="min-h-0 flex-1 overflow-hidden px-4">
          <div className="-mt-[11px] flex flex-col gap-4">
            {areas.map((a) => (
              <AreaCard key={a.name} {...a} />
            ))}
          </div>
        </div>
      </section>

      <div className="absolute bottom-4 left-1/2 h-2.5 w-[306px] -translate-x-1/2 rounded-full bg-black" />
    </main>
  );
};

export default App;
